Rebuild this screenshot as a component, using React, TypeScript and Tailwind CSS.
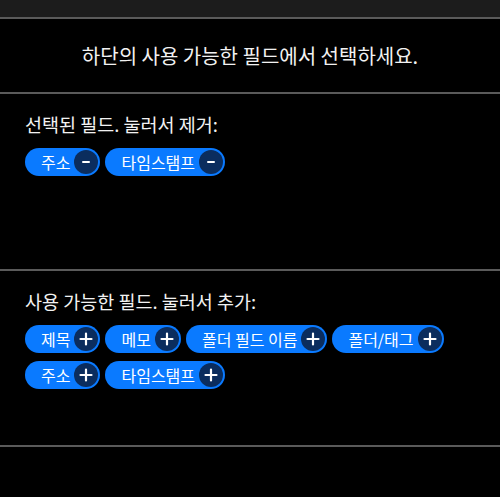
import React from 'react';

const selected = ['주소', '타임스탬프'];
const available = ['제목', '메모', '폴더 필드 이름', '폴더/태그', '주소', '타임스탬프'];

function Sign({ kind }: { kind: 'add' | 'remove' }) {
  return (
    <span className="w-[24px] h-[24px] rounded-full bg-[#0b2d5e] flex items-center justify-center shrink-0">
      {kind === 'add' ? (
        <svg width="14" height="14" viewBox="0 0 14 14">
          <path d="M7 1.5v11M1.5 7h11" stroke="#ffffff" strokeWidth="2.2" strokeLinecap="round" />
        </svg>
      ) : (
        <svg width="10" height="10" viewBox="0 0 10 10">
          <path d="M2 5h6" stroke="#ffffff" strokeWidth="2" strokeLinecap="round" />
        </svg>
      )}
    </span>
  );
}

function FieldChip({ label, kind }: { label: string; kind: 'add' | 'remove' }) {
  return (
    <button className="h-[28px] rounded-full bg-[#0a7aff] pl-[16px] pr-[2px] flex items-center gap-[4px] text-[16px] leading-none text-white">
      <span>{label}</span>
      <Sign kind={kind} />
    </button>
  );
}

export default function App() {
  return (
    <div
      className="w-full h-[497px] bg-black text-[#f2f2f2] overflow-hidden"
      style={{ fontFamily: '"Noto Sans CJK KR", "Noto Sans", sans-serif' }}
    >
      {/* top bar */}
      <div className="h-[19px] bg-[#1c1c1c] border-b-2 border-[#5a5a5a]" />

      {/* instructions */}
      <div className="h-[75px] flex items-center justify-center border-b-2 border-[#5a5a5a] text-[20px]">
        하단의 사용 가능한 필드에서 선택하세요.
      </div>

      {/* selected fields */}
      <div className="h-[177px] border-b-2 border-[#5a5a5a] px-[25px] pt-[18px]">
        <div className="text-[18.5px] leading-[24px]">선택된 필드. 눌러서 제거:</div>
        <div className="mt-3 flex flex-wrap gap-x-[5px] gap-y-[8px]">
          {selected.map(f => (
            <FieldChip key={f} label={f} kind="remove" />
          ))}
        </div>
      </div>

      {/* available fields */}
      <div className="h-[176px] border-b-2 border-[#5a5a5a] px-[25px] pt-[18px]">
        <div className="text-[18.5px] leading-[24px]">사용 가능한 필드. 눌러서 추가:</div>
        <div className="mt-3 flex flex-wrap gap-x-[5px] gap-y-[8px]">
          {available.map(f => (
            <FieldChip key={f} label={f} kind="add" />
          ))}
        </div>
      </div>
    </div>
  );
}
